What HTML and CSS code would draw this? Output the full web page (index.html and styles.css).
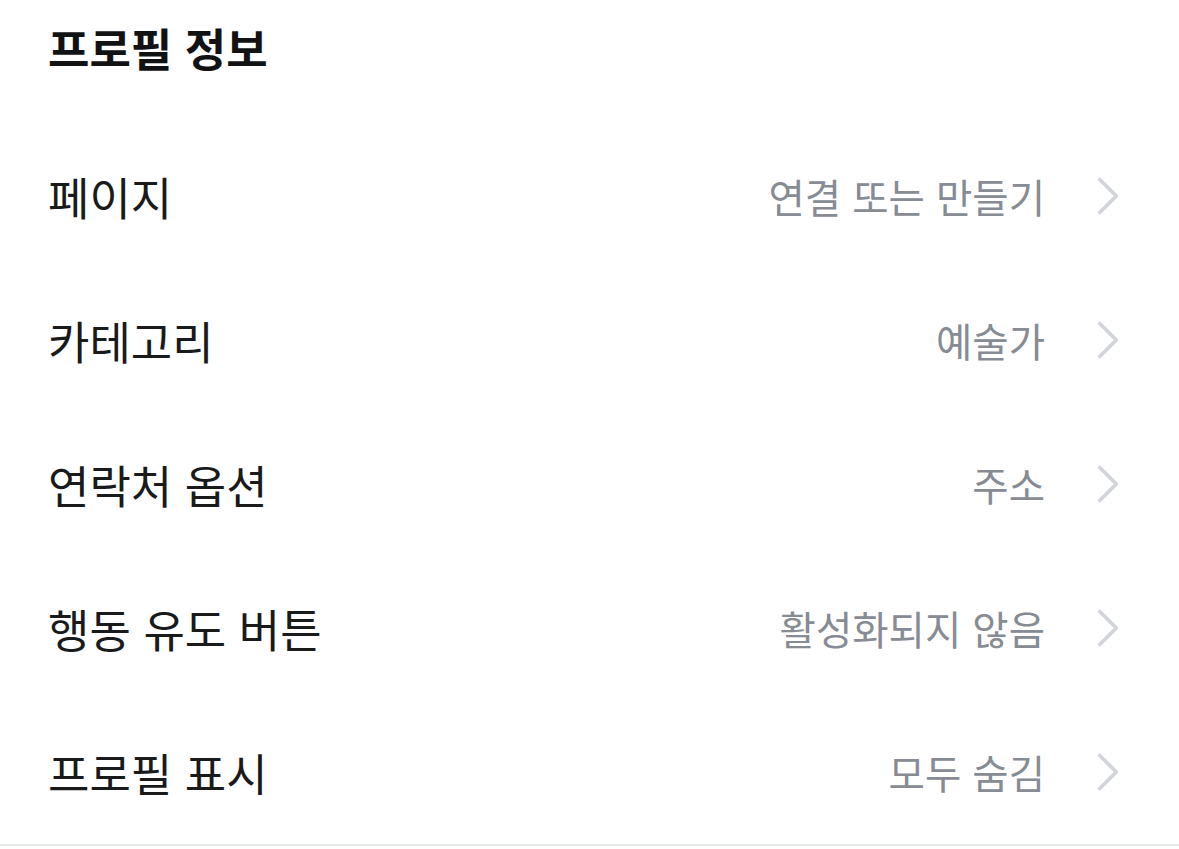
FILE: index.html
```html
<!DOCTYPE html>
<html lang="ko">
<head>
    <meta charset="UTF-8">
    <meta name="viewport" content="width=device-width, initial-scale=1.0">
    <title>프로필 정보</title>
    <link rel="stylesheet" href="styles.css">
</head>
<body>
    <main class="profile-info">
        <header class="section-header">
            <h1>프로필 정보</h1>
        </header>
        <ul class="settings-list">
            <li class="settings-row">
                <span class="label">페이지</span>
                <span class="value">연결 또는 만들기</span>
                <svg class="chevron" viewBox="0 0 24 42" aria-hidden="true"><path d="M3 3 L21 21 L3 39"/></svg>
            </li>
            <li class="settings-row">
                <span class="label">카테고리</span>
                <span class="value">예술가</span>
                <svg class="chevron" viewBox="0 0 24 42" aria-hidden="true"><path d="M3 3 L21 21 L3 39"/></svg>
            </li>
            <li class="settings-row">
                <span class="label">연락처 옵션</span>
                <span class="value">주소</span>
                <svg class="chevron" viewBox="0 0 24 42" aria-hidden="true"><path d="M3 3 L21 21 L3 39"/></svg>
            </li>
            <li class="settings-row">
                <span class="label">행동 유도 버튼</span>
                <span class="value">활성화되지 않음</span>
                <svg class="chevron" viewBox="0 0 24 42" aria-hidden="true"><path d="M3 3 L21 21 L3 39"/></svg>
            </li>
            <li class="settings-row">
                <span class="label">프로필 표시</span>
                <span class="value">모두 숨김</span>
                <svg class="chevron" viewBox="0 0 24 42" aria-hidden="true"><path d="M3 3 L21 21 L3 39"/></svg>
            </li>
        </ul>
    </main>
</body>
</html>
```

FILE: styles.css
```css
* {
    box-sizing: border-box;
    margin: 0;
    padding: 0;
}
body {
    font-family: "Noto Sans CJK KR", "Noto Sans", sans-serif;
    background-color: #ffffff;
    color: #191a1c;
}
.profile-info {
    border-bottom: 2px solid #e6e9ed;
}
.section-header {
    height: 124px;
    padding: 0 48px;
    display: flex;
    align-items: flex-start;
}
.section-header h1 {
    font-size: 45px;
    font-weight: 700;
    line-height: 96px;
    color: #111214;
}
.settings-list {
    list-style: none;
}
.settings-row {
    height: 144px;
    display: flex;
    align-items: center;
    padding: 0 60px 0 48px;
}
.label {
    font-size: 45px;
    line-height: 1;
    flex: 1;
}
.value {
    font-size: 39.5px;
    line-height: 1;
    color: #868b94;
    margin-right: 52px;
}
.chevron {
    width: 22px;
    height: 40px;
}
.chevron path {
    fill: none;
    stroke: #d1d5da;
    stroke-width: 4;
    stroke-linecap: round;
    stroke-linejoin: round;
}
```
